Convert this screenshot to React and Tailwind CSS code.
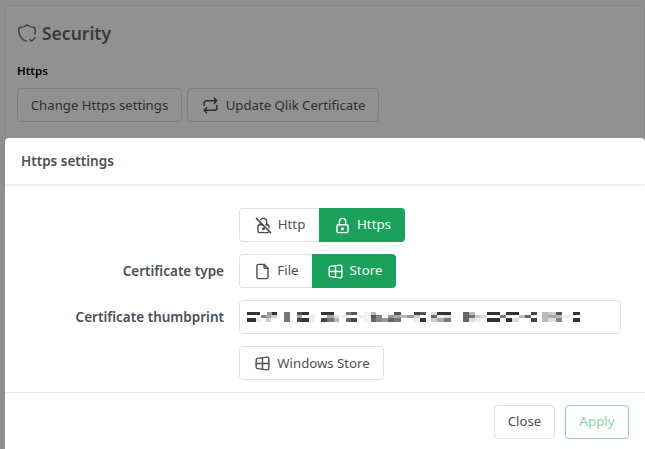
import React from 'react';
import { TbShieldCheck, TbRepeat, TbLockOff, TbLock, TbFile, TbBrandWindows } from 'react-icons/tb';

// blurred thumbprint, drawn as the mosaic it is in the picture: [x1, x2, row, grey]
const rows = [[18, 9], [27, 10], [37, 10]];
const mosaic = [
  [8, 48, 0, '#333'], [68, 84, 0, '#999'], [84, 100, 0, '#333'], [50, 65, 1, '#888'], [65, 82, 1, '#aaa'], [82, 100, 1, '#ccc'],
  [8, 35, 2, '#333'], [35, 50, 2, '#eee'], [65, 82, 2, '#ccc'],
  [120, 137, 0, '#777'], [120, 137, 1, '#777'], [120, 137, 2, '#777'],
  [160, 175, 0, '#555'], [160, 175, 1, '#aaa'], [160, 175, 2, '#444'], [175, 195, 0, '#333'], [175, 195, 2, '#333'], [195, 212, 1, '#eee'], [195, 212, 2, '#eee'],
  [232, 270, 0, '#333'], [232, 250, 2, '#444'], [250, 270, 1, '#aaa'], [250, 270, 2, '#777'], [270, 285, 1, '#ddd'], [270, 285, 2, '#bbb'],
  [290, 305, 1, '#eee'], [305, 322, 0, '#777'], [305, 322, 1, '#eee'], [305, 322, 2, '#666'], [322, 340, 0, '#555'], [322, 340, 2, '#444'],
  [345, 360, 1, '#eee'], [360, 380, 0, '#f2f2f2'], [360, 380, 1, '#f2f2f2'], [360, 380, 2, '#f2f2f2'],
  [380, 397, 0, '#bbb'], [380, 397, 1, '#555'], [380, 397, 2, '#666'], [397, 415, 1, '#888'], [397, 415, 2, '#888'], [415, 432, 2, '#999'],
  [432, 450, 1, '#999'], [432, 450, 2, '#666'], [450, 470, 0, '#555'], [450, 470, 1, '#aaa'], [450, 470, 2, '#777'], [472, 490, 1, '#bbb'], [490, 510, 1, '#999'],
  [510, 527, 0, '#444'], [510, 527, 1, '#ccc'], [510, 527, 2, '#eee'], [527, 545, 0, '#555'], [527, 545, 2, '#333'],
  [562, 580, 0, '#ddd'], [562, 580, 1, '#666'], [562, 580, 2, '#ccc'], [580, 620, 0, '#333'], [580, 600, 1, '#eee'], [580, 600, 2, '#aaa'], [600, 620, 1, '#ddd'], [600, 620, 2, '#777'],
  [657, 675, 0, '#666'], [657, 675, 1, '#666'], [657, 675, 2, '#666'], [675, 692, 0, '#bbb'], [675, 692, 1, '#777'], [675, 692, 2, '#ddd'],
  [692, 710, 1, '#ccc'], [692, 710, 2, '#eee'], [710, 730, 1, '#ddd'], [730, 768, 0, '#333'], [730, 768, 2, '#333'], [768, 785, 1, '#777'],
  [785, 825, 0, '#333'], [785, 805, 2, '#333'], [805, 825, 2, '#ddd'], [825, 842, 1, '#bbb'], [842, 860, 1, '#666'], [860, 878, 0, '#444'], [860, 878, 2, '#444'],
  [895, 912, 0, '#bbb'], [895, 912, 1, '#bbb'], [895, 912, 2, '#bbb'], [912, 935, 0, '#ccc'], [912, 935, 1, '#aaa'], [912, 935, 2, '#ddd'],
  [935, 953, 0, '#555'], [935, 953, 1, '#bbb'], [935, 953, 2, '#888'], [953, 988, 1, '#eee'], [988, 1008, 0, '#333'], [988, 1008, 2, '#333'],
];

function SegButton({ icon: Icon, label, active, first, className }) {
  return (
    <div
      className={`h-[34px] flex items-center gap-[5px] text-[13.3px] ${first ? 'rounded-l-[4px] border border-r-0 border-[#dee2e6] bg-white text-[#495057]' : ''} ${active ? 'rounded-r-[4px] bg-[#1aa15a] text-white' : ''} ${className}`}
    >
      <Icon className="w-[19px] h-[19px]" strokeWidth={1.8} />
      <span>{label}</span>
    </div>
  );
}

export default function App() {
  return (
    <div className="relative w-[645px] h-[449px] overflow-hidden bg-[#8f8f8f] font-['Noto_Sans','Open_Sans',sans-serif]">
      {/* page behind the overlay */}
      <div className="ml-[5px] mt-[5px] h-[600px] rounded-[6px] border border-[#868686] bg-[#919191] pl-[11px] pt-[14px]">
        <div className="flex items-center gap-[4px] text-[#3a3a3a]">
          <TbShieldCheck className="-ml-[1px] w-[22px] h-[22px] text-[#444]" strokeWidth={1.6} />
          <span className="text-[17.5px] font-semibold leading-[26px]">Security</span>
        </div>
        <div className="mt-[17px] text-[11.5px] font-semibold leading-[16px] text-black">Https</div>
        <div className="mt-[9px] flex gap-[5px]">
          <div className="h-[34px] w-[165px] flex items-center justify-center pt-[1px] rounded-[4px] border border-[#7f7f7f] text-[13.2px] text-[#2f2f2f]">
            Change Https settings
          </div>
          <div className="h-[34px] w-[192px] flex items-center justify-center gap-[6px] pt-[1px] rounded-[4px] border border-[#7f7f7f] text-[13.2px] text-[#2f2f2f]">
            <TbRepeat className="w-[19px] h-[19px]" strokeWidth={1.8} />
            Update Qlik Certificate
          </div>
        </div>
      </div>

      {/* modal */}
      <div className="absolute left-[5px] top-[138px] w-[640px] h-[311px] rounded-t-[4px] bg-white">
        <div className="h-[46px] flex items-center pl-[16px] pt-[1px] text-[13.5px] font-semibold text-[#495057] shadow-[0_1px_3px_rgba(0,0,0,0.12)]">
          Https settings
        </div>

        <div className="mt-[24px] ml-[234px] flex">
          <SegButton icon={TbLockOff} label="Http" first className="w-[80px] justify-center" />
          <SegButton icon={TbLock} label="Https" active className="w-[86px] justify-center" />
        </div>

        <div className="mt-[12px] flex items-center">
          <div className="w-[219px] text-right text-[13.5px] font-semibold text-[#495057]">Certificate type</div>
          <div className="ml-[15px] flex">
            <SegButton icon={TbFile} label="File" first className="w-[73px] justify-center" />
            <SegButton icon={TbBrandWindows} label="Store" active className="w-[84px] justify-center" />
          </div>
        </div>

        <div className="mt-[12px] flex items-center">
          <div className="w-[219px] text-right text-[13.5px] font-semibold text-[#495057]">Certificate thumbprint</div>
          <div className="ml-[15px] w-[382px] h-[34px] flex items-center pl-[4px] rounded-[4px] border border-[#dee2e6]">
            <svg width="340" height="22" viewBox="0 0 1020 66" shapeRendering="crispEdges">
              {mosaic.map(([x1, x2, r, c], i) => (
                <rect key={i} x={x1} y={rows[r][0]} width={x2 - x1} height={rows[r][1]} fill={c} />
              ))}
            </svg>
          </div>
        </div>

        <div className="mt-[12px] ml-[234px] w-[145px] h-[34px] flex items-center justify-center gap-[5px] pt-[1px] rounded-[4px] border border-[#dee2e6] text-[13.2px] text-[#495057]">
          <TbBrandWindows className="w-[19px] h-[19px]" strokeWidth={1.8} />
          Windows Store
        </div>

        <div className="mt-[12px] h-[57px] border-t border-[#e9ecef] flex items-start justify-end gap-[10px] pt-[12px] pr-[16px]">
          <div className="w-[61px] h-[34px] flex items-center justify-center rounded-[4px] border border-[#dee2e6] text-[13.2px] text-[#495057]">
            Close
          </div>
          <div className="w-[64px] h-[34px] flex items-center justify-center rounded-[4px] border border-[#8cd3ad] text-[13.2px] text-[#8cd3ad]">
            Apply
          </div>
        </div>
      </div>
    </div>
  );
}
